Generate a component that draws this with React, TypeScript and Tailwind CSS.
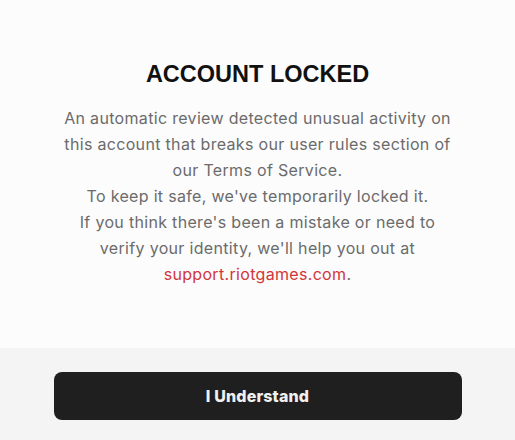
import React from 'react';

export default function App() {
  return (
    <div className="w-[515px] h-[440px] flex flex-col bg-[#fcfcfc] overflow-hidden">
      {/* Message */}
      <div className="flex-1 flex flex-col items-center pt-[62px] px-6">
        <h1 className="font-['Liberation_Sans',Arial,sans-serif] font-bold text-[23.5px] leading-[24px] text-[#111111]">
          ACCOUNT LOCKED
        </h1>
        <p className="mt-[19px] text-center font-['Inter',sans-serif] text-[16px] leading-[26px] tracking-[0.02em] text-[#6b6b6b]">
          An automatic review detected unusual activity on
          <br />
          this account that breaks our user rules section of
          <br />
          our Terms of Service.
          <br />
          To keep it safe, we've temporarily locked it.
          <br />
          If you think there's been a mistake or need to
          <br />
          verify your identity, we'll help you out at
          <br />
          <span className="text-[#d13639]">support.riotgames.com</span>.
        </p>
      </div>

      {/* Footer */}
      <div className="h-[92px] bg-[#f4f4f4] flex justify-center pt-6">
        <button className="w-[408px] h-[48px] rounded-[8px] bg-[#1f1f1f] text-[#f0f0f0] font-['Inter',sans-serif] font-extrabold text-[16px] tracking-[0.01em]">
          I Understand
        </button>
      </div>
    </div>
  );
}
